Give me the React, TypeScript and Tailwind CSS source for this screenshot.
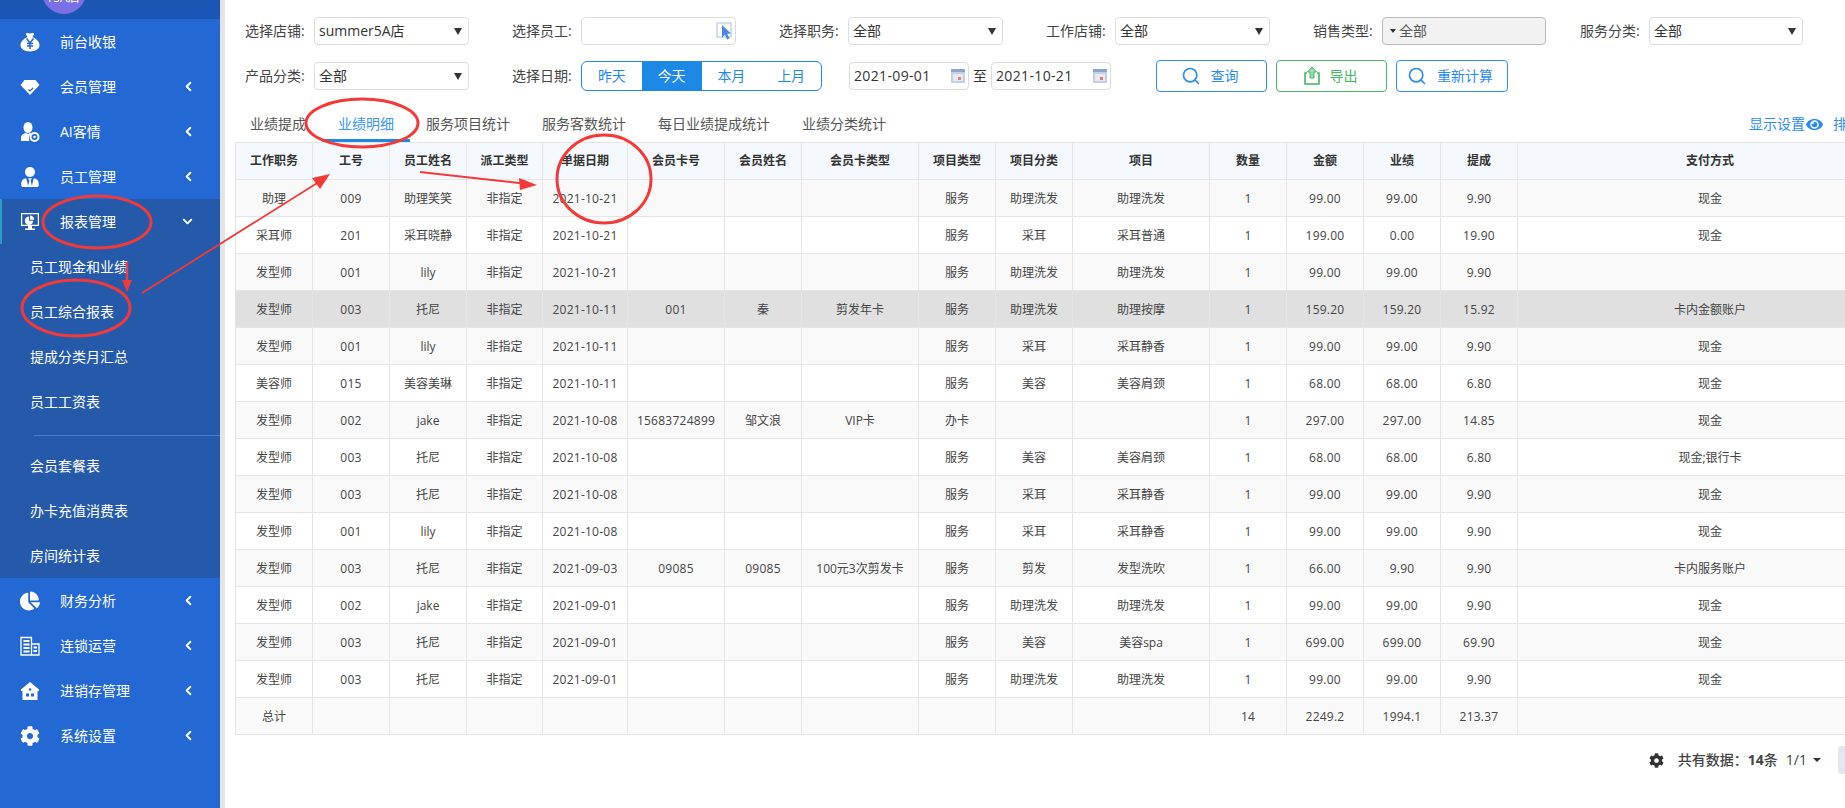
import { ChevronDown, ChevronLeft, Search } from "lucide-react";
import { FaChartPie, FaCog, FaEye, FaUserTie } from "react-icons/fa";

function BagIcon() {
  return (
    <svg viewBox="0 0 20 20" className="w-5 h-5" fill="#fff">
      <path d="M6 1.5c1-1 2.5 0 4 0s3-1 4 0c.6.8-1.2 3-1.8 3.6 3.6 1.2 7.3 4.6 7.3 8 0 4-4 6.4-9.5 6.4S.5 17.1.5 13.1c0-3.4 3.7-6.8 7.3-8C7.2 4.500 5.4 2.300 6 1.500z" />
      <path d="M6.500 6.500 10 11l3.500-4.500M10 11v6M7 11.500h6M7 14h6" stroke="#2468d3" strokeWidth="1.500" fill="none" />
    </svg>
  );
}

function GemIcon() {
  return (
    <svg viewBox="0 0 20 20" className="w-5 h-5" fill="#fff">
      <path d="M4.500 3h11L19.500 8 10 18 .5 8z" />
      <path d="M8.500 12.500 10 14l3-3" stroke="#2468d3" strokeWidth="1.200" fill="none" />
    </svg>
  );
}

function AiIcon() {
  return (
    <svg viewBox="0 0 20 20" className="w-5 h-5" fill="#fff">
      <ellipse cx="8" cy="5.500" rx="4.500" ry="5.500" />
      <path d="M1 19v-3c0-3 2.500-4.500 5-5l2 1 2-1 1.500.6A6 6 0 0 0 9.500 19z" />
      <circle cx="14.500" cy="15" r="4" fill="none" stroke="#fff" strokeWidth="2" />
      <circle cx="14.500" cy="15" r="1.300" />
    </svg>
  );
}

function ReportIcon() {
  return (
    <svg viewBox="0 0 20 20" className="w-5 h-5" fill="#fff">
      <path fillRule="evenodd" d="M1 1h18v13H1zM2.200 2.200v10.600h15.600V2.200z" />
      <path d="M10 3.500v4.200h4.200A4.200 4.200 0 0 0 10 3.500zM9 4.500a4.200 4.200 0 1 0 4.200 4.200H9z" />
      <path d="M8 14h4v2.500h3V18H5v-1.500h3z" />
    </svg>
  );
}

function BuildingIcon() {
  return (
    <svg viewBox="0 0 20 20" className="w-5 h-5" fill="none" stroke="#fff" strokeWidth="1.300">
      <path d="M1 19V1.500h10.500V19M11.500 8H19v11M.5 19h19" />
      <path d="M3.500 5h6M3.500 8.500h6M3.500 12h6M3.500 15.500h6M13.500 11.500h3.500M13.500 15h3.500" strokeWidth="1.800" />
    </svg>
  );
}

function HouseIcon() {
  return (
    <svg viewBox="0 0 20 20" className="w-5 h-5" fill="#fff">
      <path d="M10 1 19 8.500V10h-1.500v9h-15v-9H1V8.500z" />
      <circle cx="10" cy="8.500" r="1.300" fill="#2468d3" />
      <rect x="6" y="12.500" width="3" height="3" fill="#2468d3" />
      <rect x="11" y="12.500" width="3" height="3" fill="#2468d3" />
    </svg>
  );
}

function CalendarIcon() {
  return (
    <svg viewBox="0 0 14 14" className="w-[14px] h-[14px] shrink-0">
      <rect x="0" y="0" width="14" height="14" fill="#c3cfe2" />
      <rect x="0" y="0" width="14" height="3" fill="#8da6cc" />
      <rect x="2" y="5" width="10" height="7" fill="#e8e8ee" />
      <rect x="7" y="8" width="3" height="3" fill="#d9826f" />
    </svg>
  );
}

function CursorIcon() {
  return (
    <svg viewBox="0 0 18 18" className="w-[18px] h-[18px]">
      <rect x="1" y="1" width="14" height="14" fill="#fff" stroke="#b9c6e6" strokeWidth="1.200" />
      <path d="M6 3l9 8.500-3.800.3 2.300 4.700-2.300 1-2.200-4.700L6 15.500z" fill="#4a86e8" />
    </svg>
  );
}

function ExportIcon() {
  return (
    <svg viewBox="0 0 20 20" className="w-5 h-5">
      <path d="M5 7H3v11h14V7h-2" fill="none" stroke="#47b565" strokeWidth="1.600" />
      <path d="M10 1l4.500 5H12v6H8V6H5.500z" fill="#9fd8ae" stroke="#47b565" strokeWidth="1" />
    </svg>
  );
}

function Triangle() {
  return <span className="w-0 h-0 border-x-[4px] border-x-transparent border-t-[7px] border-t-[#333]" />;
}

function MenuRow({ label, icon, open, last }: { label: string; icon: React.ReactNode; open?: boolean; last?: boolean }) {
  return (
    <div className={`h-[45px] flex items-center text-white text-sm ${open ? "bg-[#2559aa] border-l-2 border-[#2e9bc0] pl-[18px]" : "pl-5"}`}>
      <span className="w-5 h-5 mr-5 flex items-center justify-center">{icon}</span>
      <span className="flex-1">{label}</span>
      {last ? null : open ? (
        <ChevronDown size={15} strokeWidth={3} className="mr-[25px]" />
      ) : (
        <ChevronLeft size={15} strokeWidth={3} className="mr-[24px]" />
      )}
    </div>
  );
}

function Field({ label, width = "w-[155px]", children }: { label: string; width?: string; children: React.ReactNode }) {
  return (
    <div className="flex items-center shrink-0">
      <span className="w-[60px] mr-[9px] text-sm text-[#444] whitespace-nowrap">{label}:</span>
      <div className={width}>{children}</div>
    </div>
  );
}

function Select({ value }: { value: string }) {
  return (
    <div className="h-7 flex items-center justify-between pl-[4px] pr-[6px] border border-[#dcdcdc] rounded bg-white text-sm text-[#333]">
      <span>{value}</span>
      <Triangle />
    </div>
  );
}

function DateBox({ value }: { value: string }) {
  return (
    <div className="w-[120px] h-7 flex items-center justify-between pl-[4px] pr-[3px] border border-[#dcdcdc] rounded text-sm text-[#333]">
      <span className="tracking-[0.35px]">{value}</span>
      <CalendarIcon />
    </div>
  );
}

const colWidths = ["w-[77px]", "w-[77px]", "w-[77px]", "w-[76px]", "w-[85px]", "w-[97px]", "w-[77px]", "w-[117px]", "w-[77px]", "w-[77px]", "w-[137px]", "w-[77px]", "w-[77px]", "w-[77px]", "w-[77px]", "w-[385px]"];

const headers = ["工作职务", "工号", "员工姓名", "派工类型", "单据日期", "会员卡号", "会员姓名", "会员卡类型", "项目类型", "项目分类", "项目", "数量", "金额", "业绩", "提成", "支付方式"];

const rows: string[][] = [
  ["助理", "009", "助理笑笑", "非指定", "2021-10-21", "", "", "", "服务", "助理洗发", "助理洗发", "1", "99.00", "99.00", "9.90", "现金"],
  ["采耳师", "201", "采耳晓静", "非指定", "2021-10-21", "", "", "", "服务", "采耳", "采耳普通", "1", "199.00", "0.00", "19.90", "现金"],
  ["发型师", "001", "lily", "非指定", "2021-10-21", "", "", "", "服务", "助理洗发", "助理洗发", "1", "99.00", "99.00", "9.90", ""],
  ["发型师", "003", "托尼", "非指定", "2021-10-11", "001", "秦", "剪发年卡", "服务", "助理洗发", "助理按摩", "1", "159.20", "159.20", "15.92", "卡内金额账户"],
  ["发型师", "001", "lily", "非指定", "2021-10-11", "", "", "", "服务", "采耳", "采耳静香", "1", "99.00", "99.00", "9.90", "现金"],
  ["美容师", "015", "美容美琳", "非指定", "2021-10-11", "", "", "", "服务", "美容", "美容肩颈", "1", "68.00", "68.00", "6.80", "现金"],
  ["发型师", "002", "jake", "非指定", "2021-10-08", "15683724899", "邹文浪", "VIP卡", "办卡", "", "", "1", "297.00", "297.00", "14.85", "现金"],
  ["发型师", "003", "托尼", "非指定", "2021-10-08", "", "", "", "服务", "美容", "美容肩颈", "1", "68.00", "68.00", "6.80", "现金;银行卡"],
  ["发型师", "003", "托尼", "非指定", "2021-10-08", "", "", "", "服务", "采耳", "采耳静香", "1", "99.00", "99.00", "9.90", "现金"],
  ["发型师", "001", "lily", "非指定", "2021-10-08", "", "", "", "服务", "采耳", "采耳静香", "1", "99.00", "99.00", "9.90", "现金"],
  ["发型师", "003", "托尼", "非指定", "2021-09-03", "09085", "09085", "100元3次剪发卡", "服务", "剪发", "发型洗吹", "1", "66.00", "9.90", "9.90", "卡内服务账户"],
  ["发型师", "002", "jake", "非指定", "2021-09-01", "", "", "", "服务", "助理洗发", "助理洗发", "1", "99.00", "99.00", "9.90", "现金"],
  ["发型师", "003", "托尼", "非指定", "2021-09-01", "", "", "", "服务", "美容", "美容spa", "1", "699.00", "699.00", "69.90", "现金"],
  ["发型师", "003", "托尼", "非指定", "2021-09-01", "", "", "", "服务", "助理洗发", "助理洗发", "1", "99.00", "99.00", "9.90", "现金"],
  ["总计", "", "", "", "", "", "", "", "", "", "", "14", "2249.2", "1994.1", "213.37", ""],
];

const tabs = ["业绩提成", "业绩明细", "服务项目统计", "服务客数统计", "每日业绩提成统计", "业绩分类统计"];

export default function App() {
  return (
    <div className="relative flex w-[1845px] h-[808px] overflow-hidden bg-white font-['Open_Sans','Noto_Sans_CJK_SC',sans-serif] text-[#333]">
      {/* sidebar */}
      <aside className="w-[220px] shrink-0 bg-[#2468d3] flex flex-col">
        <div className="h-[19px] bg-[#1c56b4] overflow-hidden flex justify-center pr-[92px]">
          <div className="w-[44px] h-[44px] shrink-0 -mt-[30px] rounded-full bg-[#7b6fe6] text-white text-xs flex items-end justify-center pb-[8px]">
            r5A店
          </div>
        </div>
        <MenuRow label="前台收银" icon={<BagIcon />} last />
        <MenuRow label="会员管理" icon={<GemIcon />} />
        <MenuRow label="AI客情" icon={<AiIcon />} />
        <MenuRow label="员工管理" icon={<FaUserTie size={20} />} />
        <MenuRow label="报表管理" icon={<ReportIcon />} open />
        <div className="bg-[#2559aa] text-white text-sm pl-[30px]">
          {["员工现金和业绩", "员工综合报表", "提成分类月汇总", "员工工资表"].map((s) => (
            <div key={s} className="h-[45px] flex items-center">{s}</div>
          ))}
          <div className="h-[19px] pt-[11px] pl-1">
            <div className="w-full h-px bg-[#4a7cd0]" />
          </div>
          {["会员套餐表", "办卡充值消费表", "房间统计表"].map((s) => (
            <div key={s} className="h-[45px] flex items-center">{s}</div>
          ))}
        </div>
        <MenuRow label="财务分析" icon={<FaChartPie size={20} />} />
        <MenuRow label="连锁运营" icon={<BuildingIcon />} />
        <MenuRow label="进销存管理" icon={<HouseIcon />} />
        <MenuRow label="系统设置" icon={<FaCog size={20} />} />
      </aside>
      <div className="w-[5px] shrink-0 bg-[#e4e4e4]" />

      {/* main */}
      <main className="flex-1 min-w-0 overflow-hidden">
        <div className="pl-[20px] pt-[17px] flex flex-col gap-[17px]">
          <div className="flex gap-[43px] h-7">
            <Field label="选择店铺"><Select value="summer5A店" /></Field>
            <Field label="选择员工">
              <div className="h-7 flex items-center justify-end pr-[1px] border border-[#dcdcdc] rounded">
                <CursorIcon />
              </div>
            </Field>
            <Field label="选择职务"><Select value="全部" /></Field>
            <Field label="工作店铺"><Select value="全部" /></Field>
            <Field label="销售类型" width="w-[164px]">
              <div className="h-7 flex items-center gap-[3px] pl-[7px] border border-[#bbb] rounded bg-[#f2f2f2] text-sm text-[#555]">
                <span className="w-0 h-0 border-x-[3px] border-x-transparent border-t-[4px] border-t-[#333]" />
                全部
              </div>
            </Field>
            <div className="-ml-[9px]">
              <Field label="服务分类" width="w-[154px]"><Select value="全部" /></Field>
            </div>
          </div>
          <div className="flex h-7 items-center">
            <Field label="产品分类"><Select value="全部" /></Field>
            <div className="ml-[43px]">
              <Field label="选择日期" width="w-[241px]">
                <div className="h-[30px] flex border border-[#1e88e5] rounded-md overflow-hidden text-sm text-[#1e88e5]">
                  <span className="flex-1 flex items-center justify-center">昨天</span>
                  <span className="flex-1 flex items-center justify-center bg-[#1e88e5] text-white">今天</span>
                  <span className="flex-1 flex items-center justify-center">本月</span>
                  <span className="flex-1 flex items-center justify-center">上月</span>
                </div>
              </Field>
            </div>
            <div className="ml-[27px]"><DateBox value="2021-09-01" /></div>
            <span className="w-[22px] text-center text-sm">至</span>
            <DateBox value="2021-10-21" />
            <button className="ml-[45px] w-[111px] h-8 flex items-center justify-center gap-[10px] pr-1 border border-[#2d8cf0] rounded text-sm text-[#2d8cf0]">
              <Search size={20} strokeWidth={2} />查询
            </button>
            <button className="ml-[9px] w-[111px] h-8 flex items-center justify-center gap-[8px] pr-1 border border-[#47b565] rounded text-sm text-[#47b565]">
              <ExportIcon />导出
            </button>
            <button className="ml-[9px] w-[112px] h-8 flex items-center justify-center gap-[10px] pr-1 border border-[#2d8cf0] rounded text-sm text-[#2d8cf0]">
              <Search size={20} strokeWidth={2} />重新计算
            </button>
          </div>
        </div>

        {/* tabs */}
        <div className="mt-[17px] ml-[9px] h-[35px] flex items-start">
          <div className="flex flex-1 text-sm text-[#555]">
            {tabs.map((t) => (
              <span key={t} className={`h-[35px] px-4 pt-[7px] whitespace-nowrap ${t === "业绩明细" ? "text-[#3a94f2] border-b-[3px] border-[#1e88e5]" : ""}`}>
                {t}
              </span>
            ))}
          </div>
          <div className="flex items-center gap-[1px] pt-[7px] text-sm text-[#2d8cf0] whitespace-nowrap -mr-[2px]">
            显示设置
            <FaEye size={17} />
            <span className="ml-[9px]">排</span>
          </div>
        </div>

        {/* table */}
        <table className="ml-[10px] w-[1668px] table-fixed border-collapse text-xs text-[#444]">
          <colgroup>
            {colWidths.map((w, i) => (
              <col key={i} className={w} />
            ))}
          </colgroup>
          <thead>
            <tr className="h-[37px] bg-[#f5f9fd]">
              {headers.map((h) => (
                <th key={h} className="border border-[#e5e5e5] font-semibold text-[#333] p-0">{h}</th>
              ))}
            </tr>
          </thead>
          <tbody>
            {rows.map((r, i) => (
              <tr key={i} className={`h-[37px] ${i === 3 ? "bg-[#e0e0e0]" : i % 2 === 0 ? "bg-[#f9f9f9]" : "bg-white"}`}>
                {r.map((c, j) => (
                  <td key={j} className={`border border-[#e5e5e5] text-center p-0 pt-px whitespace-nowrap ${/^[\d.-]+$/.test(c) ? "tracking-[0.25px]" : ""}`}>{c}</td>
                ))}
              </tr>
            ))}
          </tbody>
        </table>

        {/* pager */}
        <div className="mt-[11px] flex items-center justify-end h-7 text-sm text-[#444] whitespace-nowrap">
          <FaCog size={15} className="mr-[14px] text-[#333]" />
          <span className="font-medium">共有数据：</span>
          <span className="font-bold">14</span>
          <span className="font-medium">条</span>
          <span className="ml-2">1/1</span>
          <span className="ml-[6px] mr-[17px] w-0 h-0 border-x-[4px] border-x-transparent border-t-[4px] border-t-[#333]" />
          <div className="w-[7px] h-7 rounded-l bg-[#e3e8f0]" />
        </div>
      </main>

      {/* red marks drawn over the screenshot */}
      <svg className="absolute inset-0 pointer-events-none" width="1845" height="808" fill="none" stroke="#f23a3a" strokeWidth="3">
        <ellipse cx="97" cy="222" rx="54" ry="26" />
        <ellipse cx="76" cy="308" rx="54" ry="28" />
        <ellipse cx="362" cy="123" rx="56" ry="24" />
        <ellipse cx="604" cy="179" rx="47" ry="44" />
        <path d="M142 293 322 180" strokeWidth="1.800" />
        <path d="M330 174 312 178 320 189z" fill="#f23a3a" stroke="none" />
        <path d="M127 262v20" strokeWidth="2.500" />
        <path d="M122 280h10l-5 12z" fill="#f23a3a" stroke="none" />
        <path d="M420 172 528 184" strokeWidth="1.800" />
        <path d="M537 185 519 178 520 190z" fill="#f23a3a" stroke="none" />
      </svg>
    </div>
  );
}
